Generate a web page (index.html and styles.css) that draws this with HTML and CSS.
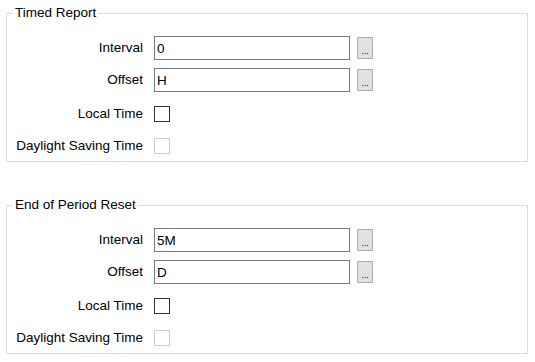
FILE: index.html
```html
<!DOCTYPE html>
<html lang="en">
<head>
    <meta charset="UTF-8">
    <title>Report Settings</title>
    <link rel="stylesheet" href="styles.css">
</head>
<body>
    <fieldset class="group">
        <legend>Timed Report</legend>
        <div class="rows">
            <label for="tr-interval">Interval</label>
            <div class="field">
                <input type="text" id="tr-interval" value="0">
                <button>...</button>
            </div>

            <label for="tr-offset">Offset</label>
            <div class="field">
                <input type="text" id="tr-offset" value="H">
                <button>...</button>
            </div>

            <label for="tr-local" class="lower">Local Time</label>
            <div class="field lower">
                <span class="check" id="tr-local"></span>
            </div>

            <label class="lower">Daylight Saving Time</label>
            <div class="field lower">
                <span class="check disabled"></span>
            </div>
        </div>
    </fieldset>

    <fieldset class="group second">
        <legend>End of Period Reset</legend>
        <div class="rows">
            <label for="ep-interval">Interval</label>
            <div class="field">
                <input type="text" id="ep-interval" value="5M">
                <button>...</button>
            </div>

            <label for="ep-offset">Offset</label>
            <div class="field">
                <input type="text" id="ep-offset" value="D">
                <button>...</button>
            </div>

            <label for="ep-local" class="lower">Local Time</label>
            <div class="field lower">
                <span class="check" id="ep-local"></span>
            </div>

            <label class="lower">Daylight Saving Time</label>
            <div class="field lower">
                <span class="check disabled"></span>
            </div>
        </div>
    </fieldset>
</body>
</html>
```

FILE: styles.css
```css
body {
    font-family: 'Liberation Sans', Arial, sans-serif;
    font-size: 13.5px;
    color: #000;
    background-color: #fff;
    margin: 0;
}

.group {
    margin: 6px 0 0 6px;
    padding: 0 0 6px 0;
    border: 1px solid #dcdcdc;
    box-sizing: border-box;
    width: 522px;
    height: 156px;
}

.group.second {
    margin-top: 36px;
}

legend {
    margin-left: 6px;
    padding: 0 2px 0 2px;
    line-height: 14px;
}

.rows {
    display: grid;
    grid-template-columns: 136px 1fr;
    column-gap: 11px;
    row-gap: 8px;
    padding-top: 16px;
}

label {
    text-align: right;
    line-height: 24px;
    height: 24px;
}

label.lower {
    line-height: 28px;
}

.field {
    display: flex;
    align-items: center;
    height: 24px;
}

.field.lower {
    align-items: flex-start;
    padding-top: 6px;
    box-sizing: border-box;
}

input[type="text"] {
    width: 196px;
    height: 24px;
    box-sizing: border-box;
    border: 1px solid #7a7a7a;
    padding: 0 2px;
    margin: 0;
    font-family: inherit;
    font-size: 13.5px;
    outline: none;
}

button {
    width: 16px;
    height: 22px;
    margin-left: 7px;
    padding: 0;
    border: 1px solid #adadad;
    background-color: #e1e1e1;
    font-family: inherit;
    font-size: 9px;
    line-height: 26px;
    color: #000;
}

.check {
    display: block;
    width: 16px;
    height: 16px;
    box-sizing: border-box;
    border: 1px solid #333;
    background-color: #fff;
}

.check.disabled {
    border-color: #cccccc;
}
```
